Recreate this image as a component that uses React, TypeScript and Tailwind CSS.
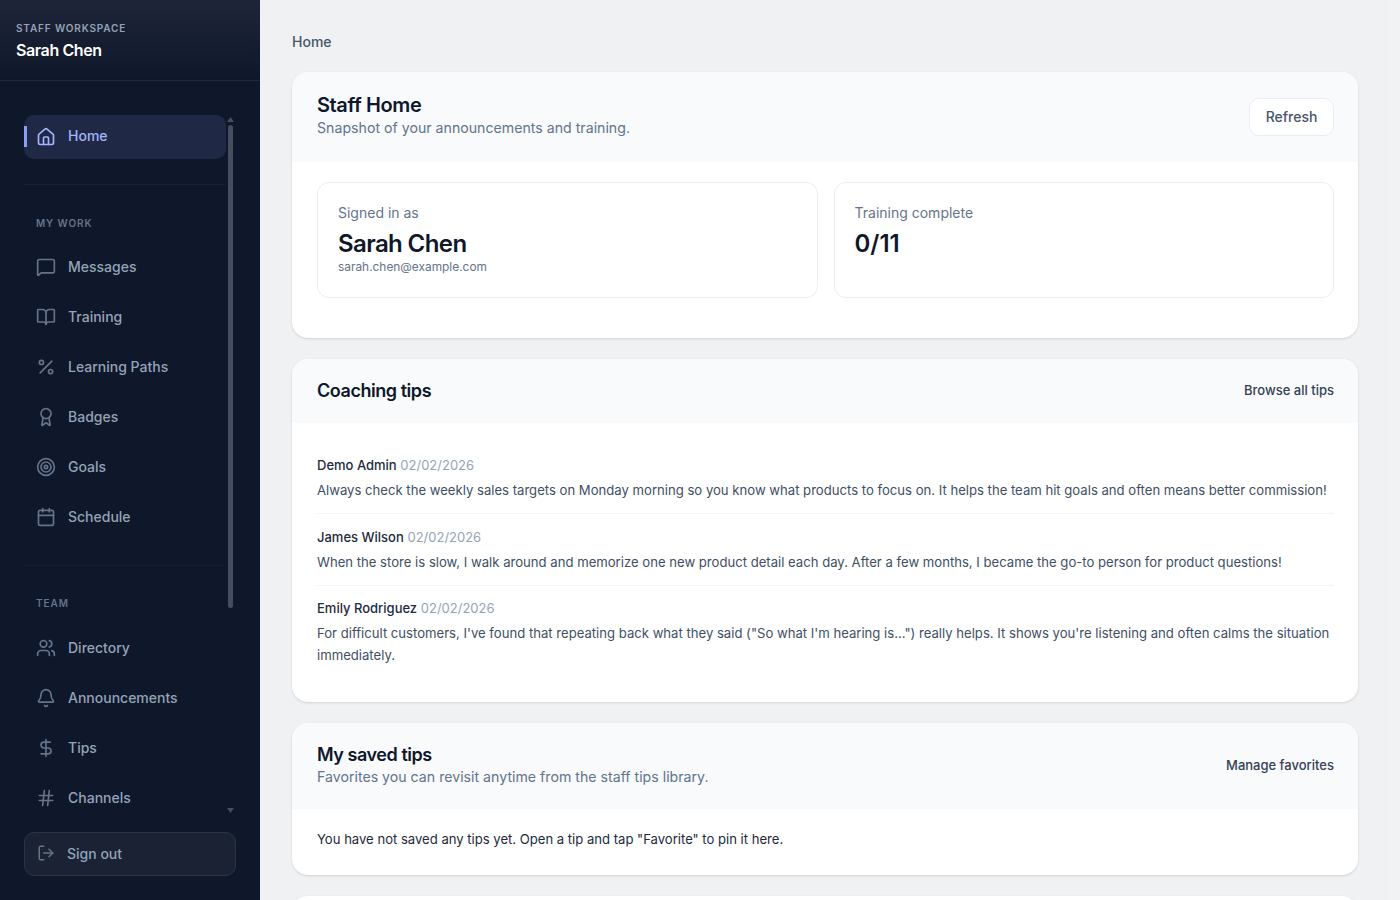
import React from "react";
import {
  House,
  MessageSquare,
  BookOpen,
  Percent,
  Award,
  Target,
  Calendar,
  Users,
  Bell,
  DollarSign,
  Hash,
  LogOut,
} from "lucide-react";

const myWork = [
  { label: "Messages", icon: MessageSquare },
  { label: "Training", icon: BookOpen },
  { label: "Learning Paths", icon: Percent },
  { label: "Badges", icon: Award },
  { label: "Goals", icon: Target },
  { label: "Schedule", icon: Calendar },
];

const team = [
  { label: "Directory", icon: Users },
  { label: "Announcements", icon: Bell },
  { label: "Tips", icon: DollarSign },
  { label: "Channels", icon: Hash },
];

const tips = [
  {
    name: "Demo Admin",
    text: "Always check the weekly sales targets on Monday morning so you know what products to focus on. It helps the team hit goals and often means better commission!",
  },
  {
    name: "James Wilson",
    text: "When the store is slow, I walk around and memorize one new product detail each day. After a few months, I became the go-to person for product questions!",
  },
  {
    name: "Emily Rodriguez",
    text: "For difficult customers, I've found that repeating back what they said (\"So what I'm hearing is...\") really helps. It shows you're listening and often calms the situation immediately.",
  },
];

const NavItem = ({ label, icon: Icon }: { label: string; icon: React.ElementType }) => (
  <a className="flex h-[44px] items-center gap-3 rounded-[10px] px-3 text-[14px] font-medium text-[#94a3b8] [&:not(:last-child)]:mb-[6px]">
    <Icon size={20} strokeWidth={2} className="mt-[1px] shrink-0 text-[#64748b]" />
    {label}
  </a>
);

const App = () => {
  return (
    <div className="flex h-[900px] overflow-hidden bg-[#f0f1f3] font-['Inter',sans-serif]">
      {/* Sidebar */}
      <aside className="flex w-[260px] shrink-0 flex-col bg-[#0f172a]">
        <div className="h-[81px] border-b border-[#1e293b] bg-gradient-to-b from-[#1e2538] to-[#0f172a] px-4 pt-[21px]">
          <p className="text-[10px] font-semibold uppercase leading-[14px] tracking-[0.085em] text-[#94a3b8]">
            Staff Workspace
          </p>
          <p className="mt-[3px] text-[16px] font-semibold leading-6 tracking-[-0.025em] text-white">Sarah Chen</p>
        </div>

        <div className="relative mx-6 mt-[34px] min-h-0 flex-1">
          <div className="h-full overflow-hidden pr-[10px]">
            <a className="relative flex h-[44px] items-center gap-3 rounded-[10px] bg-[#1f2945] px-3 pb-[3px] text-[14px] font-medium text-[#a5b4fc]">
              <span className="absolute left-0 top-[11px] h-[21px] w-[3px] bg-[#8c9df5]" />
              <House size={20} strokeWidth={2} className="mt-[3px] shrink-0" />
              Home
            </a>
            <div className="mt-[25px] border-t border-[#172033]" />
            <p className="mb-[14px] mt-[31px] px-3 text-[10px] font-semibold uppercase leading-[14px] tracking-[0.09em] text-[#64748b]">
              My Work
            </p>
            <div>
              {myWork.map((item) => (
                <NavItem key={item.label} {...item} />
              ))}
            </div>
            <div className="mt-[27px] border-t border-[#172033]" />
            <p className="mb-[15px] mt-[30px] px-3 text-[10px] font-semibold uppercase leading-[14px] tracking-[0.09em] text-[#64748b]">
              Team
            </p>
            <div>
              {team.map((item) => (
                <NavItem key={item.label} {...item} />
              ))}
            </div>
          </div>
          {/* scrollbar of the nav list */}
          <svg width="7" height="5" viewBox="0 0 7 5" className="absolute left-[203px] top-[2px] fill-[#454d5e]">
            <path d="M3.5 0 7 5H0z" />
          </svg>
          <div className="absolute left-[204px] top-[10px] h-[483px] w-[5px] rounded-full bg-[#454d5e]" />
          <svg width="7" height="5" viewBox="0 0 7 5" className="absolute bottom-[2px] left-[203px] fill-[#454d5e]">
            <path d="M0 0h7L3.5 5z" />
          </svg>
        </div>

        <div className="px-6 pb-6 pt-[17px]">
          <button className="flex h-[44px] w-full items-center gap-3 rounded-[10px] border border-[#2a3447] bg-[#1a2233] px-3 pb-[2px] text-[14px] font-medium text-[#94a3b8]">
            <LogOut size={18} strokeWidth={2} className="shrink-0 text-[#64748b]" />
            Sign out
          </button>
        </div>
      </aside>

      {/* Main */}
      <main className="relative flex-1 overflow-hidden pl-8 pr-[42px] pt-8">
        <div className="absolute inset-y-0 right-0 w-[10px] bg-[#f1f2f4]" />
        <p className="text-[14px] font-medium leading-5 text-[#475569]">Home</p>

        <section className="mt-[20px] overflow-hidden rounded-2xl bg-white shadow-sm">
          <div className="flex h-[90px] items-center justify-between bg-[#f8fafc] pb-[4px] pl-[25px] pr-6">
            <div>
              <h2 className="text-[20px] font-semibold leading-[26px] tracking-[-0.02em] text-[#0f172a]">Staff Home</h2>
              <p className="text-[14.16px] leading-5 text-[#64748b]">Snapshot of your announcements and training.</p>
            </div>
            <button className="mt-[4px] h-[38px] w-[85px] rounded-[10px] border border-[#e9edf5] bg-white pb-[2px] text-[14px] font-medium text-[#475569]">
              Refresh
            </button>
          </div>
          <div className="grid grid-cols-2 gap-4 pb-10 pl-[25px] pr-6 pt-5">
            <div className="h-[116px] rounded-xl border border-[#e9edf5] px-5 py-5">
              <p className="text-[14px] leading-5 text-[#64748b]">Signed in as</p>
              <p className="mt-[6px] text-[24px] font-semibold leading-[30px] tracking-[-0.025em] text-[#0f172a]">Sarah Chen</p>
              <p className="text-[11.9px] leading-4 text-[#64748b]">sarah.chen@example.com</p>
            </div>
            <div className="h-[116px] rounded-xl border border-[#e9edf5] px-5 py-5">
              <p className="text-[14px] leading-5 text-[#64748b]">Training complete</p>
              <p className="mt-[6px] text-[24px] font-semibold leading-[30px] text-[#0f172a]">0/11</p>
            </div>
          </div>
        </section>

        <section className="mt-[21px] overflow-hidden rounded-2xl bg-white shadow-sm">
          <div className="flex h-[64px] items-center justify-between bg-[#f8fafc] pl-[25px] pr-6">
            <h2 className="-mt-[2px] text-[18px] font-semibold tracking-[-0.025em] text-[#0f172a]">Coaching tips</h2>
            <a className="text-[13px] font-medium text-[#334155]">Browse all tips</a>
          </div>
          <div className="pb-[35px] pl-[25px] pr-6 pt-[32px]">
            {tips.map((tip, i) => (
              <div key={tip.name} className={i < 2 ? "mb-[12.3px] border-b border-[#f1f5f9] pb-3" : ""}>
                <p className="text-[13px] leading-5">
                  <span className="font-medium text-[#1e293b]">{tip.name}</span>{" "}
                  <span className="text-[#94a3b8]">02/02/2026</span>
                </p>
                <p className="mt-1 text-[13.12px] leading-[22.3px] text-[#414f64]">{tip.text}</p>
              </div>
            ))}
          </div>
        </section>

        <section className="mt-[21px] overflow-hidden rounded-2xl bg-white shadow-sm">
          <div className="flex items-center justify-between bg-[#f8fafc] pb-[22px] pl-[25px] pr-6 pt-5">
            <div>
              <h2 className="text-[18px] font-semibold leading-6 tracking-[-0.025em] text-[#0f172a]">My saved tips</h2>
              <p className="text-[14.16px] leading-5 text-[#64748b]">Favorites you can revisit anytime from the staff tips library.</p>
            </div>
            <a className="mt-[2px] text-[13px] font-medium text-[#334155]">Manage favorites</a>
          </div>
          <div className="pb-[25px] pl-[25px] pr-6 pt-[19px] text-[13.08px] leading-[22px] text-[#1e293b]">
            You have not saved any tips yet. Open a tip and tap "Favorite" to pin it here.
          </div>
        </section>

        <section className="mt-[21px] h-[200px] rounded-2xl bg-white shadow-sm" />
      </main>
    </div>
  );
};

export default App;
